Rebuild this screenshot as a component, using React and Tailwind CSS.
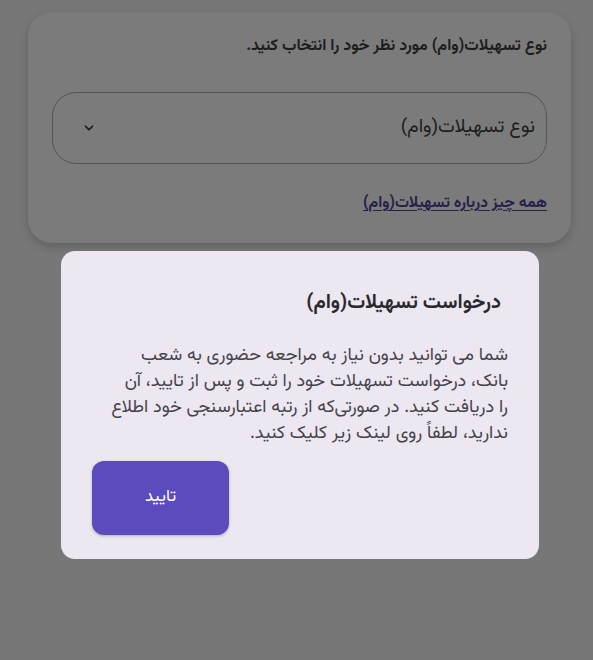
import React from "react";

function Chevron() {
  return (
    <svg width="14" height="14" viewBox="0 0 24 24" fill="none" stroke="#1b1b1b" strokeWidth="3" strokeLinecap="round" strokeLinejoin="round">
      <path d="M6 9l6 6 6-6" />
    </svg>
  );
}

export default function App() {
  const font = { fontFamily: '"Vazirmatn", "Noto Sans Arabic", "DejaVu Sans", sans-serif' };
  return (
    <div dir="rtl" style={font} className="relative w-[593px] h-[660px] bg-[#777777] overflow-hidden">
      <div className="ml-[28px] mr-[22px] mt-[12px] rounded-[24px] bg-[#7b7b7b] shadow-[0_4px_10px_rgba(0,0,0,0.18)] px-[24px] pt-[24px] pb-[28px]">
        <div className="text-[16px] leading-[22px] font-bold text-[#1d1d1d]">
          نوع تسهیلات(وام) مورد نظر خود را انتخاب کنید.
        </div>
        <div className="mt-[34px] h-[72px] rounded-[24px] border-[1.5px] border-[#555555] flex items-center justify-between pr-[11px] pl-[29px]">
          <span className="text-[19px] text-[#1d1d1d]">نوع تسهیلات(وام)</span>
          <Chevron />
        </div>
        <div className="mt-[28px] leading-[22px]">
          <span className="text-[15.6px] font-bold text-[#25204a] underline underline-offset-[3px]">
            همه چیز درباره تسهیلات(وام)
          </span>
        </div>
      </div>

      <div className="absolute left-[61px] top-[251px] w-[478px] h-[308px] rounded-[14px] bg-[#ece7f0] pt-[37px] pr-[38px] pl-[31px]">
        <div className="text-[20px] leading-[30px] font-bold text-[#2a2a2e]">درخواست تسهیلات(وام)</div>
        <div className="mt-[25px] mr-[-7px] text-[18px] leading-[26px] text-[#45434a] whitespace-nowrap">
          شما می توانید بدون نیاز به مراجعه حضوری به شعب
          <br />
          بانک، درخواست تسهیلات خود را ثبت و پس از تایید، آن
          <br />
          را دریافت کنید. در صورتی‌که از رتبه اعتبارسنجی خود اطلاع
          <br />
          ندارید، لطفاً روی لینک زیر کلیک کنید.
        </div>
        <div className="mt-[14px] flex justify-end">
          <button className="w-[137px] h-[74px] rounded-[12px] bg-[#5b4bbd] text-white text-[17px] shadow-[0_1px_3px_rgba(0,0,0,0.25)]">
            تایید
          </button>
        </div>
      </div>
    </div>
  );
}
